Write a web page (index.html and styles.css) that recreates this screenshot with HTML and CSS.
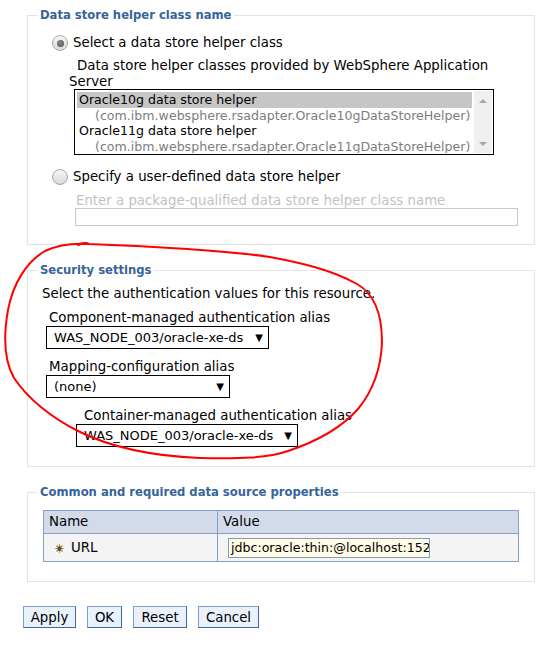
FILE: index.html
```html
<!DOCTYPE html>
<html>
<head>
<meta charset="utf-8">
<title>Data source</title>
<link rel="stylesheet" href="styles.css">
</head>
<body>
<div class="page">
  <fieldset class="group g1">
    <legend>Data store helper class name</legend>
    <div class="radio-row first"><span class="radio checked"></span><span>Select a data store helper class</span></div>
    <div class="desc">Data store helper classes provided by WebSphere Application Server</div>
    <div class="listbox">
      <div class="options">
        <div class="opt selected">Oracle10g data store helper</div>
        <div class="opt sub">(com.ibm.websphere.rsadapter.Oracle10gDataStoreHelper)</div>
        <div class="opt">Oracle11g data store helper</div>
        <div class="opt sub">(com.ibm.websphere.rsadapter.Oracle11gDataStoreHelper)</div>
      </div>
      <div class="scrollbar"><span class="arr up"></span><span class="arr down"></span></div>
    </div>
    <div class="radio-row second"><span class="radio"></span><span>Specify a user-defined data store helper</span></div>
    <div class="hint">Enter a package-qualified data store helper class name</div>
    <div class="textbox"></div>
  </fieldset>

  <fieldset class="group g2">
    <legend>Security settings</legend>
    <div class="intro">Select the authentication values for this resource.</div>
    <div class="lbl l1">Component-managed authentication alias</div>
    <div class="select s1"><span>WAS_NODE_003/oracle-xe-ds</span><span class="caret">▼</span></div>
    <div class="lbl l2">Mapping-configuration alias</div>
    <div class="select s2"><span>(none)</span><span class="caret">▼</span></div>
    <div class="lbl l3">Container-managed authentication alias</div>
    <div class="select s3"><span>WAS_NODE_003/oracle-xe-ds</span><span class="caret">▼</span></div>
  </fieldset>

  <fieldset class="group g3">
    <legend>Common and required data source properties</legend>
    <table class="props">
      <colgroup><col class="col-name"><col class="col-val"></colgroup>
      <thead>
        <tr><th class="c-name">Name</th><th class="c-val">Value</th></tr>
      </thead>
      <tbody>
        <tr>
          <td class="c-name"><span class="req"><svg width="9" height="9" viewBox="0 0 9 9"><path d="M4.5 0.3v8.4M0.3 4.5h8.4M1.5 1.5l6 6M7.5 1.5l-6 6" stroke="#9c8c4e" stroke-width="1.2"/><circle cx="4.5" cy="4.5" r="1.9" fill="#5e4d1e"/></svg></span>URL</td>
          <td class="c-val"><div class="valinput">jdbc:oracle:thin:@localhost:152</div></td>
        </tr>
      </tbody>
    </table>
  </fieldset>

  <div class="buttons">
    <button class="btn b-apply">Apply</button>
    <button class="btn b-ok">OK</button>
    <button class="btn b-reset">Reset</button>
    <button class="btn b-cancel">Cancel</button>
  </div>
</div>
<svg class="scribble" width="556" height="658" viewBox="0 0 556 658">
  <path d="M78 245 C84 242 90 243 88 244 C72 243 58 245 45 251 C26 262 13 284 8 310 C3 338 5 362 14 378 C28 399 52 418 78 431 C108 446 150 456 200 458 C240 459 268 458 288 451 C318 441 343 426 358 409 C372 392 381 370 382 342 C382 312 373 293 357 284 C332 270 302 263 270 257 C230 251 150 246 88 244" fill="none" stroke="#ff0000" stroke-width="2" stroke-linecap="round"/>
</svg>
</body>
</html>
```
FILE: styles.css
```css
html, body {
  margin: 0;
  background: #ffffff;
}
body {
  font-family: "DejaVu Sans", Verdana, sans-serif;
  font-size: 13.33px;
  line-height: 16px;
  color: #000;
  position: relative;
}
.page {
  padding: 8px 0 0 23px;
}
.group {
  box-sizing: border-box;
  width: 508px;
  margin: 0 0 0 4px;
  padding: 0;
  border: 1px solid #e3e3e3;
  min-width: 0;
}
.group legend {
  margin-left: 9px;
  padding: 0 3px;
  font-size: 11.6px;
  line-height: 14px;
  font-weight: bold;
  color: #36649a;
}
.g2, .g3 {
  margin-top: 18px;
}

/* group 1 */
.radio-row {
  display: flex;
  align-items: center;
  gap: 5px;
  height: 18px;
  margin-left: 24px;
}
.radio-row.first { margin-top: 12px; }
.radio-row.second { margin-top: 13px; }
.radio {
  box-sizing: border-box;
  width: 16px;
  height: 16px;
  border-radius: 50%;
  border: 1px solid #a9a9a9;
  background: linear-gradient(#f6f6f6, #d9d9d9);
  position: relative;
  flex: none;
}
.radio.checked::after {
  content: "";
  position: absolute;
  left: 3.5px;
  top: 3.5px;
  width: 7px;
  height: 7px;
  border-radius: 50%;
  background: radial-gradient(circle at 40% 40%, #8a8a8a, #4a4a4a);
}
.desc {
  margin: 6px 0 0 41px;
  width: 425px;
  text-indent: 8px;
  height: 31px;
}
.listbox {
  box-sizing: border-box;
  margin-left: 46px;
  width: 420px;
  height: 66px;
  border: 1px solid #000;
  display: flex;
  padding: 2px 1px 1px 2px;
  font-size: 12.6px;
}
.options {
  flex: 1;
  min-width: 0;
  overflow: hidden;
}
.opt {
  line-height: 15.5px;
  height: 15.5px;
  padding-left: 2px;
  white-space: nowrap;
}
.opt.selected {
  background: #c6c6c6;
}
.opt.sub {
  padding-left: 18px;
  color: #7d7d7d;
}
.scrollbar {
  width: 18px;
  margin-left: 2px;
  margin-top: -1px;
  background: #f0f0f0;
  display: flex;
  flex-direction: column;
  justify-content: space-between;
  align-items: center;
  padding: 8px 0 7px;
  flex: none;
}
.arr {
  width: 0;
  height: 0;
  border-left: 4px solid transparent;
  border-right: 4px solid transparent;
}
.arr.up { border-bottom: 4px solid #a6a6a6; }
.arr.down { border-top: 4px solid #a6a6a6; }
.hint {
  margin: 7px 0 0 48px;
  color: #c2c2c2;
  height: 15px;
}
.textbox {
  box-sizing: border-box;
  margin-left: 47px;
  width: 443px;
  height: 18px;
  border: 1px solid #c9c9c9;
  margin-bottom: 18px;
}

/* group 2 */
.intro {
  margin: 9px 0 0 14px;
}
.l1 { margin: 8px 0 0 21px; }
.l2 { margin: 10px 0 0 21px; }
.l3 { margin: 10px 0 0 56px; }
.select {
  box-sizing: border-box;
  height: 23px;
  border: 1px solid #000;
  display: flex;
  align-items: center;
  justify-content: space-between;
  padding: 0 5px 0 7px;
  font-size: 13px;
}
.caret {
  font-size: 10px;
}
.s1 { margin-left: 18px; width: 223px; }
.s2 { margin-left: 18px; width: 184px; }
.s3 { margin-left: 48px; width: 222px; margin-bottom: 19px; }

/* group 3 */
.props {
  margin: 11px 0 19px 15px;
  width: 476px;
  border-collapse: collapse;
  border: 1px solid #859fcb;
  table-layout: fixed;
}
.col-name { width: 174px; }
.props th, .props td {
  border: 1px solid #859fcb;
  text-align: left;
  font-weight: normal;
  padding: 0 5px;
}
.props th {
  background: #d3daea;
  height: 22px;
}
.props td {
  background: #f4f4f4;
  height: 27px;
}
.props td.c-name { padding-left: 11px; }
.req {
  display: inline-block;
  width: 9px;
  height: 9px;
  margin-right: 7px;
  vertical-align: -1px;
}
.req svg { display: block; }
.props td.c-val { padding-left: 10px; }
.valinput {
  box-sizing: border-box;
  width: 202px;
  height: 20px;
  border: 1px solid #7f9db9;
  background: #fffbe5;
  padding-left: 2px;
  line-height: 18px;
  font-size: 12.6px;
  white-space: nowrap;
  overflow: hidden;
}

/* buttons */
.buttons {
  display: flex;
  gap: 11px;
  margin-top: 24px;
}
.btn {
  box-sizing: border-box;
  height: 22px;
  font-family: "DejaVu Sans", Verdana, sans-serif;
  font-size: 13.33px;
  color: #000;
  background: #e9f1fc;
  border: 1px solid #7f9fc8;
  border-bottom-color: #3f6a9e;
  border-right-color: #3f6a9e;
  padding: 1px 0 0;
  margin: 0;
}
.b-apply { width: 53px; }
.b-ok { width: 35px; }
.b-reset { width: 54px; }
.b-cancel { width: 61px; }

.scribble {
  position: absolute;
  left: 0;
  top: 0;
  pointer-events: none;
}
```
